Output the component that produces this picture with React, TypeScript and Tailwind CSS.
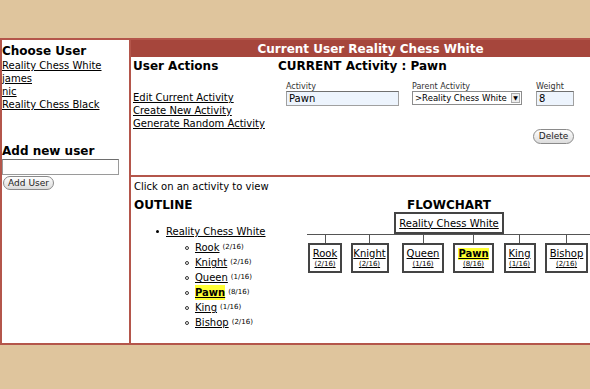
const font = { fontFamily: '"DejaVu Sans", Verdana, sans-serif' }

const users = ['Reality Chess White', 'james', 'nic', 'Reality Chess Black']

const pieces = [
  { name: 'Rook', count: '2/16', cell: 'w-[36px]', box: 'w-[34px]' },
  { name: 'Knight', count: '2/16', cell: 'w-[53px]', box: 'w-[38px]' },
  { name: 'Queen', count: '1/16', cell: 'w-[54px]', box: 'w-[42px]' },
  { name: 'Pawn', count: '8/16', cell: 'w-[47px]', box: 'w-[41px]', current: true },
  { name: 'King', count: '1/16', cell: 'w-[45px]', box: 'w-[32px]' },
  { name: 'Bishop', count: '2/16', cell: 'w-[49px]', box: 'w-[43px]' },
]

function PillButton({ label, className }: { label: string; className: string }) {
  return (
    <div
      className={`flex items-center justify-center rounded-full border border-[#8a8a8a] bg-gradient-to-b from-white to-[#dcdcdc] text-[9px] leading-none text-[#222] ${className}`}
    >
      {label}
    </div>
  )
}

function Field({ label, children }: { label: string; children: React.ReactNode }) {
  return (
    <div className="flex flex-col">
      <span className="text-[8px] leading-[9px] text-[#333]">{label}</span>
      {children}
    </div>
  )
}

export default function App() {
  return (
    <div className="w-[590px] h-[389px] overflow-hidden bg-[#dfc59d]" style={font}>
      <div className="mt-[38px] flex w-[612px] h-[307px] border-2 border-[#b4564b] bg-white text-black">
        {/* left column */}
        <div className="w-[129px] shrink-0 border-r-2 border-[#b4564b] pt-[4px]">
          <h2 className="text-[12px] leading-[14px] font-bold">Choose User</h2>
          <div className="mt-[1px] flex flex-col text-[10px] leading-[13px]">
            {users.map((u) => (
              <a key={u} className="underline w-fit">{u}</a>
            ))}
          </div>
          <h2 className="mt-[33px] text-[12px] leading-[14px] font-bold">Add new user</h2>
          <div className="mt-[1px] h-[16px] w-[117px] border border-[#9a9a9a] border-t-[#6e6e6e] bg-white" />
          <PillButton label="Add User" className="mt-[1px] ml-[1px] h-[14px] w-[51px]" />
        </div>

        {/* right column */}
        <div className="flex-1 flex flex-col">
          <div className="h-[17px] bg-[#a6463c] flex items-center justify-center text-white text-[12px] font-bold">
            Current User Reality Chess White
          </div>

          <div className="h-[120px] flex border-b-2 border-[#b4564b]">
            <div className="w-[147px] pl-[2px] pt-[2px]">
              <h2 className="text-[12px] leading-[14px] font-bold">User Actions</h2>
              <div className="mt-[18px] flex flex-col text-[10px] leading-[13px]">
                <a className="underline w-fit">Edit Current Activity</a>
                <a className="underline w-fit">Create New Activity</a>
                <a className="underline w-fit">Generate Random Activity</a>
              </div>
            </div>
            <div className="pt-[2px]">
              <h2 className="text-[12px] leading-[14px] font-bold">CURRENT Activity : Pawn</h2>
              <div className="ml-[8px] w-fit flex flex-col">
                <div className="mt-[9px] flex">
                  <Field label="Activity">
                    <div className="h-[15px] w-[113px] border border-[#a0a0a0] border-t-[#707070] bg-[#edf4fd] pl-[2px] text-[10px] leading-[13px]">
                      Pawn
                    </div>
                  </Field>
                  <div className="ml-[13px]">
                    <Field label="Parent Activity">
                      <div className="h-[14px] w-[110px] border border-[#8c8c8c] bg-white flex items-center text-[8.5px] leading-[12px]">
                        <span className="flex-1 pl-[2px] whitespace-nowrap">&gt;Reality Chess White</span>
                        <span className="mr-[1px] flex h-[10px] w-[9px] shrink-0 items-center justify-center border border-[#aaa] bg-[#eee] text-[6px]">▼</span>
                      </div>
                    </Field>
                  </div>
                  <div className="ml-[14px]">
                    <Field label="Weight">
                      <div className="h-[15px] w-[38px] border border-[#a0a0a0] border-t-[#707070] bg-[#edf4fd] pl-[2px] text-[10px] leading-[13px]">
                        8
                      </div>
                    </Field>
                  </div>
                </div>
                <PillButton label="Delete" className="mt-[23px] self-end h-[15px] w-[41px]" />
              </div>
            </div>
          </div>

          {/* outline + flowchart */}
          <div className="flex-1 flex flex-col pl-[3px] pt-[3px]">
            <p className="text-[10px] leading-[13px]">Click on an activity to view</p>
            <div className="mt-[5px] flex">
              <div className="w-[173px]">
                <h2 className="text-[12px] leading-[14px] font-bold">OUTLINE</h2>
                <ul className="mt-[13px] ml-[22px] text-[10px]">
                  <li className="flex items-center leading-[13px]">
                    <span className="mr-[7px] h-[3px] w-[3px] rounded-full bg-black" />
                    <a className="underline">Reality Chess White</a>
                  </li>
                  <li className="mt-[2px] ml-[29px]">
                    {pieces.map((p) => (
                      <div key={p.name} className="flex items-center h-[15px]">
                        <span className="mr-[6px] h-[4px] w-[4px] rounded-full border border-[#333]" />
                        <a className={p.current ? 'underline font-bold bg-[#ffff33]' : 'underline'}>{p.name}</a>
                        <span className="ml-[3px] text-[7px]">({p.count})</span>
                      </div>
                    ))}
                  </li>
                </ul>
              </div>

              <div className="w-[284px] flex flex-col items-center">
                <h2 className="text-[12px] leading-[14px] font-bold">FLOWCHART</h2>
                <div className="h-[22px] w-[110px] border-2 border-[#444] flex items-center justify-center text-[10px]">
                  <a className="underline">Reality Chess White</a>
                </div>
                <div className="w-full border-t border-[#555] flex">
                  {pieces.map((p) => (
                    <div key={p.name} className={`flex flex-col items-center ${p.cell}`}>
                      <div className="h-[8px] w-px bg-[#555]" />
                      <div className={`h-[30px] border-2 border-[#444] flex flex-col items-center pt-[3px] ${p.box}`}>
                        <a className={p.current ? 'underline text-[10px] leading-[12px] font-bold bg-[#ffff33]' : 'underline text-[10px] leading-[12px]'}>
                          {p.name}
                        </a>
                        <span className="underline text-[7px] leading-[9px]">({p.count})</span>
                      </div>
                    </div>
                  ))}
                </div>
              </div>
            </div>
          </div>
        </div>
      </div>
    </div>
  )
}
